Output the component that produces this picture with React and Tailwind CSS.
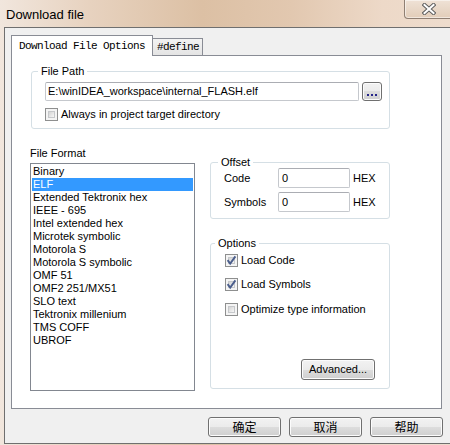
import React from "react";

const SANS = "font-['Liberation_Sans',Arial,sans-serif]";

function CheckBox({ checked }) {
  return (
    <span className="relative block w-[13px] h-[13px] shrink-0 border border-[#8e8f8f] bg-[#f4f4f4] p-[2px]">
      <span className="block w-full h-full border border-[#c6c8cb] bg-[linear-gradient(135deg,#d3d3d3,#f7f7f7)]" />
      {checked && (
        <svg className="absolute left-0 top-0" width="11" height="11" viewBox="0 0 11 11">
          <path d="M1.6 5.2 L4.2 8.6 L9.4 1.4" stroke="#4b5e8c" strokeWidth="1.9" fill="none" />
        </svg>
      )}
    </span>
  );
}

function Group({ label, labelLeft, className, children }) {
  return (
    <div className={"relative border border-[#d5dfe5] rounded-[3px] " + className}>
      <span className={"absolute -top-[8px] bg-white px-[3px] leading-[15px] text-[11px] text-black " + labelLeft}>
        {label}
      </span>
      {children}
    </div>
  );
}

function Btn({ children, className }) {
  return (
    <div
      className={
        "flex items-center justify-center border border-[#707070] rounded-[3px] bg-[linear-gradient(#f2f2f2_0%,#ebebeb_50%,#dddddd_50%,#cfcfcf_100%)] shadow-[inset_0_0_0_1px_#fcfcfc] " +
        className
      }
    >
      {children}
    </div>
  );
}

const formats = [
  "Binary",
  "ELF",
  "Extended Tektronix hex",
  "IEEE - 695",
  "Intel extended hex",
  "Microtek symbolic",
  "Motorola S",
  "Motorola S symbolic",
  "OMF 51",
  "OMF2 251/MX51",
  "SLO text",
  "Tektronix millenium",
  "TMS COFF",
  "UBROF",
];

export default function App() {
  return (
    <div
      className={
        "w-[450px] h-[445px] overflow-hidden bg-[linear-gradient(90deg,#f1e6dd_0%,#e7d2bf_20%,#dcc0a4_45%,#e2c8b0_65%,#edd9c8_85%,#eedccd_100%)] " +
        SANS
      }
    >
      {/* Title bar */}
      <div className="relative h-[27px] flex items-center">
        <span className="pl-[6px] text-[13px] leading-[18px] text-black mt-[2px]">Download file</span>
        <div className="absolute right-[-6px] top-0 w-[52px] h-[19px] border border-t-0 border-[#8f7f73] rounded-b-[4px] bg-[linear-gradient(#efe2d6,#e2cdb9)] shadow-[inset_0_0_0_1px_rgba(255,255,255,0.5)] flex items-center justify-start pl-[17px]">
          <svg width="14" height="12" viewBox="0 0 14 12">
            <path d="M2.5 2 L11.5 10 M11.5 2 L2.5 10" stroke="#5e5e5e" strokeWidth="4" strokeLinecap="square" fill="none" />
            <path d="M2.5 2 L11.5 10 M11.5 2 L2.5 10" stroke="#ffffff" strokeWidth="2" strokeLinecap="square" fill="none" />
          </svg>
        </div>
      </div>

      {/* Client area */}
      <div className="ml-[4px] h-[417px] border-l border-t border-b border-[#6f6f6f] bg-[#f0f0f0] pl-[6px] pt-[7px]">
        {/* Tab headers */}
        <div className="flex items-end h-[20px] font-['Liberation_Mono',monospace] text-[11px] tracking-[-0.6px] text-black">
          <div className="relative z-10 -mb-[1px] w-[142px] h-[21px] border border-b-0 border-[#898c95] bg-white flex items-center pl-[7px]">
            Download File Options
          </div>
          <div className="w-[50px] h-[17px] border-t border-r border-[#898c95] bg-[linear-gradient(#f3f3f3,#e4e4e4)] flex items-center pl-[4px] pt-[1px]">
            #define
          </div>
        </div>

        {/* Tab panel */}
        <div className="w-[431px] h-[354px] border border-[#898c95] bg-white text-[11px] text-black">
          {/* File Path group */}
          <Group label="File Path" labelLeft="left-[6px]" className="ml-[19px] mt-[15px] w-[359px] h-[58px] pl-[13px] pt-[10px]">
            <div className="flex items-center gap-[3px]">
              <div className="w-[314px] h-[19px] border border-[#c5c8cd] border-t-[#abadb3] rounded-[2px] bg-white flex items-center pl-[2px] leading-[15px] whitespace-nowrap">
                {"E:\\winIDEA_workspace\\internal_FLASH.elf"}
              </div>
              <Btn className="w-[20px] h-[19px] items-end pb-[4px]">
                <span className="flex gap-[2px]">
                  <span className="block w-[2px] h-[2px] bg-[#26268a]" />
                  <span className="block w-[2px] h-[2px] bg-[#26268a]" />
                  <span className="block w-[2px] h-[2px] bg-[#26268a]" />
                </span>
              </Btn>
            </div>
            <div className="mt-[7px] flex items-center gap-[3px] h-[13px]">
              <CheckBox />
              <span className="leading-[15px]">Always in project target directory</span>
            </div>
          </Group>

          {/* Lower row */}
          <div className="mt-[17px] flex">
            <div className="ml-[18px] w-[165px]">
              <div className="leading-[15px] h-[15px]">File Format</div>
              <div className="mt-[2px] h-[228px] border border-[#828790] bg-white p-[1px]">
                {formats.map((f, i) => (
                  <div
                    key={f}
                    className={
                      "h-[13px] leading-[13px] pl-[1px] whitespace-nowrap " +
                      (i === 1 ? "bg-[#3399ff] text-white" : "text-black")
                    }
                  >
                    {f}
                  </div>
                ))}
              </div>
            </div>

            <div className="ml-[15px] pt-[16px] flex flex-col">
              <Group label="Offset" labelLeft="left-[7px]" className="w-[180px] h-[57px] pl-[13px] pt-[5px]">
                <div className="flex items-center h-[20px]">
                  <span className="w-[54px] leading-[15px]">Code</span>
                  <div className="w-[72px] h-[20px] border border-[#c5c8cd] border-t-[#abadb3] rounded-[2px] bg-white flex items-center pl-[3px]">0</div>
                  <span className="ml-[3px]">HEX</span>
                </div>
                <div className="mt-[4px] flex items-center h-[20px]">
                  <span className="w-[54px] leading-[15px]">Symbols</span>
                  <div className="w-[72px] h-[20px] border border-[#c5c8cd] border-t-[#abadb3] rounded-[2px] bg-white flex items-center pl-[3px]">0</div>
                  <span className="ml-[3px]">HEX</span>
                </div>
              </Group>

              <Group label="Options" labelLeft="left-[4px]" className="mt-[24px] w-[180px] h-[146px] pl-[14px] pt-[10px] pr-[14px] pb-[8px] flex flex-col">
                <div className="flex items-center gap-[3px] h-[13px]">
                  <CheckBox checked />
                  <span className="leading-[15px]">Load Code</span>
                </div>
                <div className="mt-[11px] flex items-center gap-[3px] h-[13px]">
                  <CheckBox checked />
                  <span className="leading-[15px]">Load Symbols</span>
                </div>
                <div className="mt-[12px] flex items-center gap-[3px] h-[13px]">
                  <CheckBox />
                  <span className="leading-[15px]">Optimize type information</span>
                </div>
                <Btn className="mt-auto self-end w-[74px] h-[21px]">
                  <span className="leading-[15px]">Advanced...</span>
                </Btn>
              </Group>
            </div>
          </div>
        </div>

        {/* Dialog buttons */}
        <div className="mt-[8px] flex justify-end gap-[8px] pr-[7px] font-['Noto_Sans_CJK_SC',sans-serif] text-[12px] text-black">
          <Btn className="w-[73px] h-[20px]">确定</Btn>
          <Btn className="w-[73px] h-[20px]">取消</Btn>
          <Btn className="w-[73px] h-[20px]">帮助</Btn>
        </div>
      </div>
    </div>
  );
}
